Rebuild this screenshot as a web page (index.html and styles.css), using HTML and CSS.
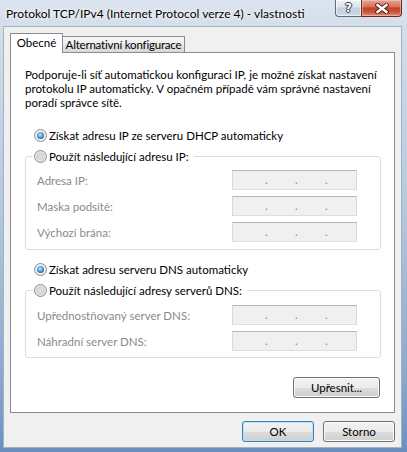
FILE: index.html
```html
<!DOCTYPE html>
<html lang="cs">
<head>
<meta charset="utf-8">
<title>Protokol TCP/IPv4 - vlastnosti</title>
<link rel="stylesheet" href="styles.css">
</head>
<body>
<div class="window">
  <div class="titlebar">
    <span class="title">Protokol TCP/IPv4 (Internet Protocol verze 4) - vlastnosti</span>
    <div class="caption">
      <div class="cb cb-help"><span class="help-glyph">?</span></div>
      <div class="cb cb-close">
        <svg width="14" height="11" viewBox="0 0 14 11"><path d="M2.5 2 L11.5 9 M11.5 2 L2.5 9" stroke="#4a1b12" stroke-width="4.2" stroke-linecap="square" fill="none"/><path d="M2.5 2 L11.5 9 M11.5 2 L2.5 9" stroke="#ffffff" stroke-width="2.4" stroke-linecap="square" fill="none"/></svg>
      </div>
    </div>
  </div>
  <div class="client">
    <div class="tabs">
      <div class="tab tab-active">Obecné</div>
      <div class="tab tab-alt">Alternativní konfigurace</div>
    </div>
    <div class="panel">
      <p class="intro">Podporuje-li síť automatickou konfiguraci IP, je možné získat nastavení<br>protokolu IP automaticky. V opačném případě vám správné nastavení<br>poradí správce sítě.</p>
      <div class="radio-row row-ip"><span class="radio on"></span><span>Získat adresu IP ze serveru DHCP automaticky</span></div>
      <fieldset class="group">
        <legend class="legend"><span class="radio"></span><span>Použít následující adresu IP:</span></legend>
        <div class="fields">
          <span class="lbl">Adresa IP:</span><span class="ip"><span>.</span><span>.</span><span>.</span></span>
          <span class="lbl">Maska podsítě:</span><span class="ip"><span>.</span><span>.</span><span>.</span></span>
          <span class="lbl">Výchozí brána:</span><span class="ip"><span>.</span><span>.</span><span>.</span></span>
        </div>
      </fieldset>
      <div class="radio-row row-dns"><span class="radio on"></span><span>Získat adresu serveru DNS automaticky</span></div>
      <fieldset class="group">
        <legend class="legend"><span class="radio"></span><span>Použít následující adresy serverů DNS:</span></legend>
        <div class="fields fields-dns">
          <span class="lbl">Upřednostňovaný server DNS:</span><span class="ip"><span>.</span><span>.</span><span>.</span></span>
          <span class="lbl">Náhradní server DNS:</span><span class="ip"><span>.</span><span>.</span><span>.</span></span>
        </div>
      </fieldset>
      <div class="adv-row"><button class="btn btn-adv">Upřesnit...</button></div>
    </div>
    <div class="footer">
      <button class="btn btn-default">OK</button>
      <button class="btn">Storno</button>
    </div>
  </div>
</div>
</body>
</html>
```
FILE: styles.css
```css
html, body {
  margin: 0;
  padding: 0;
}
body {
  width: 407px;
  height: 452px;
  overflow: hidden;
  font-family: Lato, "Liberation Sans", sans-serif;
  font-size: 11.5px;
  font-weight: 400;
  color: #000;
}
.window {
  width: 407px;
  height: 452px;
  display: flex;
  flex-direction: column;
  background: linear-gradient(to bottom, #dbe4ee 0px, #d3dde9 30px, #b7c9de 200px, #8aa8cc 380px, #6a8fbf 452px);
}
.titlebar {
  flex: none;
  height: 26px;
  display: flex;
  justify-content: space-between;
  align-items: flex-start;
}
.title {
  padding: 6px 0 0 6px;
  line-height: 16px;
  font-size: 12px;
  white-space: nowrap;
  text-shadow: 0 0 6px #ffffff, 0 0 3px #ffffff;
}
.caption {
  display: flex;
  margin-right: 5px;
  height: 17px;
}
.cb {
  box-sizing: border-box;
  height: 17px;
  display: flex;
  align-items: center;
  justify-content: center;
  border: 1px solid #5b6b80;
  border-top: none;
}
.cb-help {
  width: 26px;
  border-right: none;
  border-bottom-left-radius: 4px;
  background: linear-gradient(to bottom, #eef2f7 0%, #d9e2ec 45%, #c2d0df 50%, #cbd8e6 100%);
  box-shadow: inset 0 0 0 1px rgba(255, 255, 255, 0.6);
}
.help-glyph {
  font-family: "DejaVu Sans", sans-serif;
  font-weight: bold;
  font-size: 12px;
  line-height: 12px;
  color: #ffffff;
  text-shadow: 1px 0 0 #333c48, -1px 0 0 #333c48, 0 1px 0 #333c48, 0 -1px 0 #333c48;
}
.cb-close {
  width: 41px;
  border-bottom-right-radius: 4px;
  border-color: #6b2a20;
  background: linear-gradient(to bottom, #e7a595 0%, #d8765f 40%, #c4432b 50%, #cc5339 75%, #e09278 100%);
  box-shadow: inset 0 0 0 1px rgba(255, 220, 210, 0.45);
}
.client {
  flex: 1;
  margin: 0 5px 4px 3px;
  box-sizing: border-box;
  background: #f0f0f0;
  border: 1px solid #a2b2c5;
  padding: 6px 6px 5px 6px;
  display: flex;
  flex-direction: column;
}
.tabs {
  flex: none;
  height: 19px;
  display: flex;
  align-items: flex-end;
}
.tab {
  box-sizing: border-box;
  border: 1px solid #898c95;
  border-bottom: none;
  text-align: center;
  line-height: 15px;
  white-space: nowrap;
}
.tab-active {
  position: relative;
  z-index: 1;
  width: 53px;
  height: 20px;
  margin-bottom: -1px;
  padding-top: 1px;
  background: #ffffff;
}
.tab-alt {
  width: 122px;
  height: 16px;
  border-left: none;
  letter-spacing: -0.2px;
  background: linear-gradient(to bottom, #f6f6f6 0%, #ededed 50%, #e3e3e3 51%, #d9d9d9 100%);
}
.panel {
  flex: none;
  box-sizing: border-box;
  height: 361px;
  border: 1px solid #898c95;
  background: #ffffff;
  padding: 15px 13px 0 14px;
}
.intro {
  margin: 0;
  line-height: 14px;
  white-space: nowrap;
}
.radio-row {
  display: flex;
  align-items: center;
  gap: 2px;
  height: 15px;
  padding-left: 9px;
  white-space: nowrap;
}
.row-ip {
  margin-top: 18px;
}
.row-dns {
  margin-top: 12px;
}
.radio {
  flex: none;
  box-sizing: border-box;
  width: 13px;
  height: 13px;
  border-radius: 50%;
  border: 1px solid #8c8f93;
  background: radial-gradient(circle at 50% 50%, #e2e2e2 0%, #d4d4d4 40%, #e8e8e8 70%, #fafafa 100%);
  display: flex;
  align-items: center;
  justify-content: center;
}
.radio.on {
  background: radial-gradient(circle at 50% 50%, #ffffff 0%, #f0f0f0 60%, #dcdcdc 100%);
}
.radio.on::after {
  content: "";
  width: 7px;
  height: 7px;
  border-radius: 50%;
  background: radial-gradient(circle at 45% 40%, #c9ecfc 0%, #5db3e6 35%, #1b63ab 75%, #0d4a87 100%);
}
.group {
  margin: 6px 0 0 0;
  padding: 0;
  border: 1px solid #d5dfe5;
  border-radius: 3px;
}
.legend {
  margin-left: 7px;
  padding: 0 5px 0 1px;
  display: flex;
  align-items: center;
  gap: 2px;
  line-height: 15px;
  height: 15px;
  white-space: nowrap;
}
.fields {
  display: grid;
  grid-template-columns: 1fr 125px;
  row-gap: 6px;
  align-items: center;
  padding: 6px 23px 7px 11px;
}
.fields-dns {
  padding-top: 7px;
  padding-bottom: 6px;
}
.lbl {
  color: #8a8a8a;
  white-space: nowrap;
}
.ip {
  box-sizing: border-box;
  height: 20px;
  border: 1px solid;
  border-color: #b5b5b5 #d8d8d8 #dedede #d8d8d8;
  background: #f0f0f0;
  display: flex;
  gap: 28px;
  padding-left: 32px;
  color: #8a8a8a;
  line-height: 18px;
}
.ip span {
  width: 2px;
  text-align: center;
}
.adv-row {
  display: flex;
  justify-content: flex-end;
  margin-top: 19px;
  padding-right: 1px;
}
.btn {
  box-sizing: border-box;
  height: 21px;
  padding: 0;
  border: 1px solid #707070;
  border-radius: 3px;
  background: linear-gradient(to bottom, #f2f2f2 0%, #ebebeb 50%, #dddddd 51%, #cfcfcf 100%);
  box-shadow: inset 0 0 0 1px #fbfbfb;
  font: inherit;
  font-weight: 400;
  color: #000;
  line-height: 17px;
}
.btn-adv {
  width: 87px;
}
.footer {
  flex: none;
  display: flex;
  justify-content: flex-end;
  gap: 9px;
  margin-top: 8px;
}
.footer .btn {
  width: 72px;
}
.btn-default {
  border-color: #3c7fb1;
  box-shadow: inset 0 0 0 1px #b8e4f8;
}
```
